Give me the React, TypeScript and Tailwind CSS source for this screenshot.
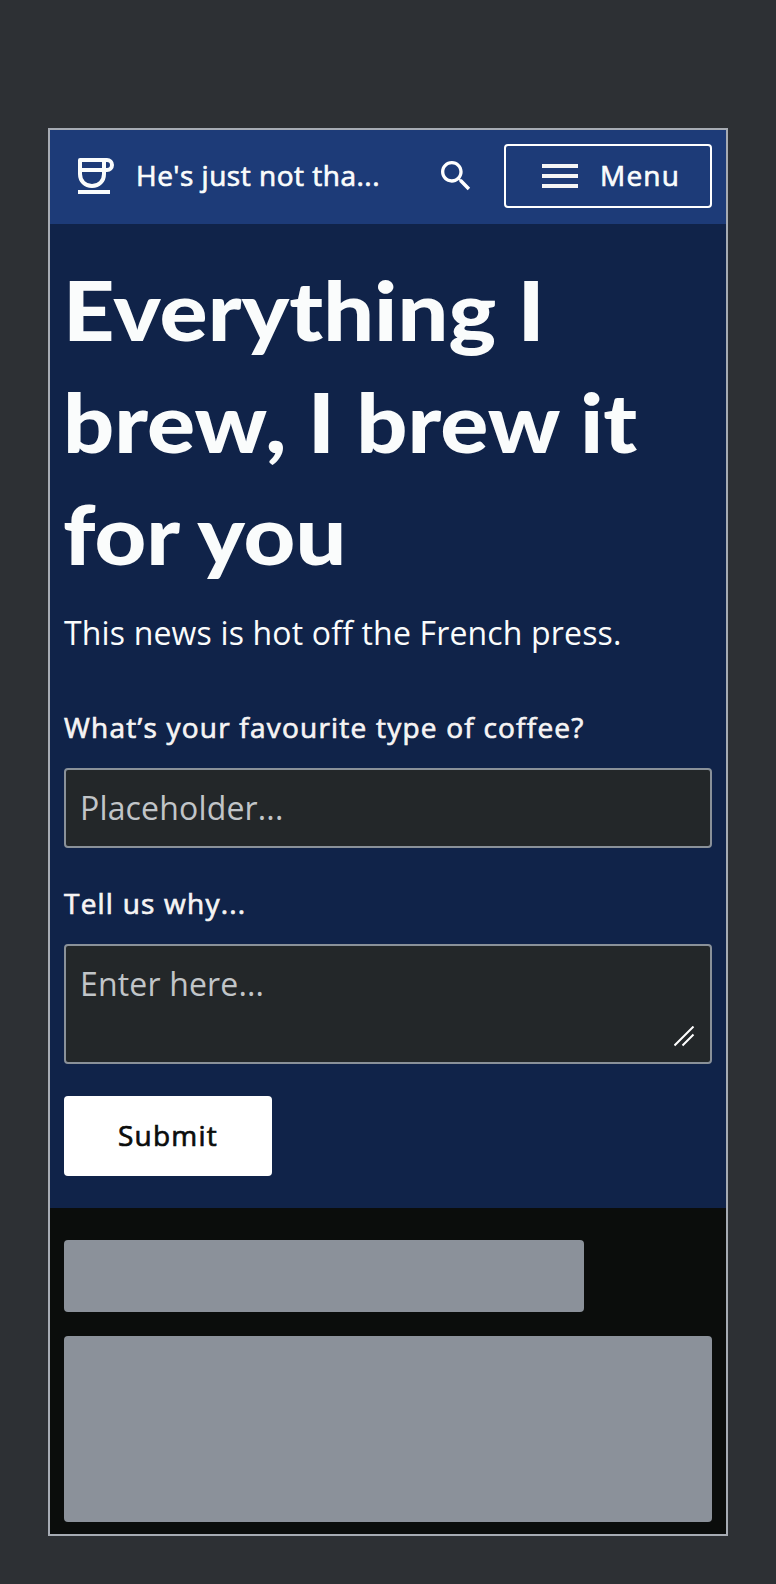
import React from "react";

function CupIcon() {
  return (
    <svg className="size-10 shrink-0" viewBox="0 0 40 40" fill="none" stroke="#fafcfc" strokeWidth="4">
      <path d="M6 4h24v14c0 7-5 12-12 12S6 25 6 18z" strokeLinejoin="round" />
      <path d="M6 14h27a5 5 0 0 0 0-10h-4" />
      <path d="M4 36h32" />
    </svg>
  );
}

function SearchIcon() {
  return (
    <svg className="size-10" viewBox="0 0 24 24" fill="#ffffff">
      <path d="M15.500 14h-.79l-.28-.27C15.410 12.590 16 11.110 16 9.500 16 5.910 13.090 3 9.500 3S3 5.910 3 9.500 5.910 16 9.500 16c1.610 0 3.090-.59 4.230-1.570l.27.28v.79l5 4.990L20.490 19l-4.990-5zm-6 0C7.010 14 5 11.990 5 9.500S7.010 5 9.500 5 14 7.010 14 9.500 11.990 14 9.500 14z" />
    </svg>
  );
}

function Header() {
  return (
    <header className="flex h-[94px] items-center bg-[#1d3b78] pr-[14px] pb-[2px] pl-6">
      <CupIcon />
      <span className="ml-[22px] w-[261px] pb-[2px] text-[28px] leading-10 tracking-[0.5px] whitespace-nowrap text-[#fafcfc] [-webkit-text-stroke:0.7px_#fafcfc]">
        He's just not tha...
      </span>
      <button className="ml-[39px] flex size-10 items-center justify-center" aria-label="Search">
        <SearchIcon />
      </button>
      <button className="ml-auto flex h-16 w-[208px] items-center rounded-[4px] border-2 border-white pl-9 text-[28px] leading-10 tracking-[1.2px] text-[#fafcfc] [-webkit-text-stroke:0.7px_#fafcfc]">
        <span className="mr-[22px] flex w-9 flex-col gap-1.5">
          <span className="h-1 bg-[#f4f5f7]" />
          <span className="h-1 bg-[#f4f5f7]" />
          <span className="h-1 bg-[#f4f5f7]" />
        </span>
        <span className="pb-[2px]">Menu</span>
      </button>
    </header>
  );
}

function Hero() {
  return (
    <main className="flex h-[984px] flex-col bg-[#102349] px-[14px] pt-[29px]">
      <h1 className="-ml-px origin-left scale-x-[1.095] font-[Lato,sans-serif] text-[82px] leading-[112px] font-black whitespace-nowrap text-[#fafcfc]">
        <span className="block">Everything I</span>
        <span className="block">brew, I brew it</span>
        <span className="block">for you</span>
      </h1>
      <p className="mt-5 text-[32px] leading-[48px] tracking-[0.16px] whitespace-nowrap text-[#fafcfc]">
        This news is hot off the French press.
      </p>
      <form className="flex flex-col items-start">
        <label htmlFor="coffee" className="mt-[50px] h-[41px] text-[28px] leading-10 tracking-[1.22px] whitespace-nowrap text-[#f6f4f4] [-webkit-text-stroke:0.7px_#f6f4f4]">
          What’s your favourite type of coffee?
        </label>
        <input
          id="coffee"
          placeholder="Placeholder..."
          className="mt-5 h-20 w-full rounded-[4px] border-2 border-[#8a9199] bg-[#232729] px-[14px] pb-[2px] text-[32px] leading-[48px] tracking-[0.16px] placeholder:text-[#c1c5c8]"
        />
        <label htmlFor="why" className="mt-[35px] h-[41px] text-[28px] leading-10 tracking-[1.22px] whitespace-nowrap text-[#f6f4f4] [-webkit-text-stroke:0.7px_#f6f4f4]">
          Tell us why...
        </label>
        <div className="relative mt-5 h-[120px] w-full">
          <textarea
            id="why"
            placeholder="Enter here..."
            className="block size-full resize-none rounded-[4px] border-2 border-[#8a9199] bg-[#232729] px-[14px] py-[14px] text-[32px] leading-[48px] tracking-[0.16px] placeholder:text-[#c1c5c8]"
          />
          <svg className="absolute right-[17px] bottom-[17px] size-[21px]" viewBox="0 0 21 21" stroke="#ffffff" strokeWidth="2">
            <path d="M0.500 19.500 19.500 0.500M8.500 19.500 19.500 8.500" />
          </svg>
        </div>
        <button type="button" className="mt-8 h-20 w-[208px] rounded-[4px] bg-white pb-[2px] text-[28px] leading-10 tracking-[1.22px] text-[#0b0d0c] [-webkit-text-stroke:0.7px_#0b0d0c]">
          Submit
        </button>
      </form>
    </main>
  );
}

export default function App() {
  return (
    <div className="h-[1584px] w-[776px] bg-[#2d3034] px-12 pt-32 font-['Open_Sans',sans-serif]">
      <div className="flex h-[1408px] flex-col border-2 border-[#a6abb3]">
        <Header />
        <Hero />
        <section className="flex flex-1 flex-col gap-6 bg-[#0b0d0c] px-[14px] pt-8">
          <div className="h-[72px] w-[520px] rounded-[4px] bg-[#8b919a]" />
          <div className="h-[186px] rounded-[4px] bg-[#8b919a]" />
        </section>
      </div>
    </div>
  );
}
